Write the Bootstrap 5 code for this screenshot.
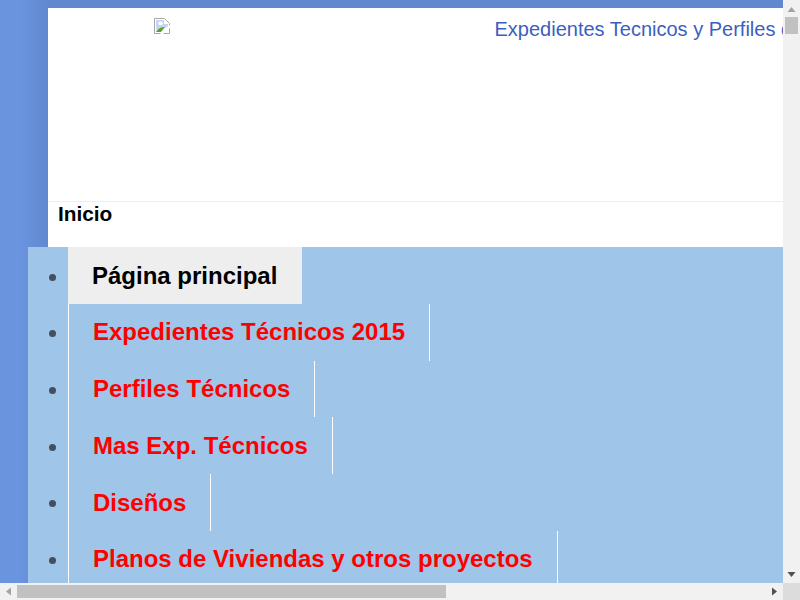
<!DOCTYPE html>
<html lang="es">
<head>
  <meta charset="UTF-8" />
  <title>Expedientes Tecnicos</title>
  <link href="https://cdn.jsdelivr.net/npm/bootstrap@5.3.0/dist/css/bootstrap.min.css" rel="stylesheet">
  <style>
    html, body { height: 100%; overflow: hidden; }
    body { font-family: "Liberation Sans", Arial, sans-serif; background: #f1f1f1; }

    .shell { width: 800px; height: 600px; }
    .shell-main { min-height: 0; }
    .page-view {
      width: 783px;
      overflow: hidden;
      padding-top: 8px;
      background: linear-gradient(90deg, #6b94df 0, #6b94df 20px, #5f88cf 48px);
    }

    .sheet { margin-left: 48px; background: #fff; }
    .sheet-top { height: 193px; }
    .broken-pic { margin: 10px 0 0 106px; width: 16px; height: 16px; }
    .site-title { margin: 8px 0 0 324.500px; font-size: 20px; line-height: 26px; color: #3b5fc0; white-space: nowrap; }
    .sheet-foot { height: 46.300px; border-top: 1px solid #eee; padding-left: 10px; }
    .sheet-foot h2 { font-size: 20.800px; font-weight: 700; line-height: 24px; margin: 0; color: #000; }

    .menu-band { margin: 0 0 0 28px; padding: 0; background: #9fc5e8; list-style: none; }
    .menu-row { display: flex; height: 56.700px; }
    .menu-dot { width: 40px; display: flex; align-items: center; justify-content: center; padding-top: 3px; flex: none; }
    .menu-dot i { width: 7px; height: 7px; border-radius: 50%; background: #444e5f; margin-left: 8px; }
    .menu-link {
      display: block;
      height: 100%;
      font-size: 24px;
      font-weight: 700;
      line-height: 56px;
      padding: .48px 24px 0;
      color: #f00;
      text-decoration: none;
      white-space: nowrap;
      border-left: 1px solid #fff;
      border-right: 1px solid #fff;
    }
    .menu-link.is-current { color: #000; background: #eee; border-left: 0; border-right-color: #eee; }

    .bar-y { width: 17px; background: #f1f1f1; }
    .bar-x { height: 17px; background: #f1f1f1; }
    .bar-btn { width: 17px; height: 17px; flex: none; }
    .thumb-y { height: 17px; width: 13px; margin: 0 auto; background: #c1c1c1; }
    .thumb-x { width: 429px; height: 13px; margin-top: 2px; background: #c1c1c1; }
    .corner { width: 17px; height: 17px; background: #dcdcdc; }
  </style>
</head>
<body class="m-0">
  <div class="shell d-flex flex-column">
    <div class="shell-main d-flex flex-grow-1">
      <div class="page-view">
        <div class="sheet">
          <div class="sheet-top d-flex">
            <svg class="broken-pic flex-shrink-0" viewBox="0 0 16 16">
              <path d="M.5.5H10.500L15.500 5.500V15.500H.5Z" fill="#fff" stroke="#a8a8a8"/>
              <path d="M2 2H10V6H14V9L2 12Z" fill="#c5d5f3"/>
              <path d="M4 5C5 3 8 3 9 5L8 7H5Z" fill="#fff"/>
              <path d="M2 14C4 10 8 9 11 9L7 14Z" fill="#5ba02e"/>
              <path d="M7 16L16 8" stroke="#fff" stroke-width="2.500"/>
            </svg>
            <div class="site-title">Expedientes Tecnicos y Perfiles de Proyectos</div>
          </div>
          <div class="sheet-foot"><h2>Inicio</h2></div>
        </div>
        <ul class="menu-band">
          <li class="menu-row"><span class="menu-dot"><i></i></span><a class="menu-link is-current" href="#">Página principal</a></li>
          <li class="menu-row"><span class="menu-dot"><i></i></span><a class="menu-link" href="#">Expedientes Técnicos 2015</a></li>
          <li class="menu-row"><span class="menu-dot"><i></i></span><a class="menu-link" href="#">Perfiles Técnicos</a></li>
          <li class="menu-row"><span class="menu-dot"><i></i></span><a class="menu-link" href="#">Mas Exp. Técnicos</a></li>
          <li class="menu-row"><span class="menu-dot"><i></i></span><a class="menu-link" href="#">Diseños</a></li>
          <li class="menu-row"><span class="menu-dot"><i></i></span><a class="menu-link" href="#">Planos de Viviendas y otros proyectos</a></li>
        </ul>
      </div>
      <div class="bar-y d-flex flex-column">
        <svg class="bar-btn" viewBox="0 0 17 17"><path d="M4.500 12L8.500 7L12.500 12Z" fill="#a3a3a3"/></svg>
        <div class="thumb-y"></div>
        <svg class="bar-btn mt-auto" viewBox="0 0 17 17"><path d="M4.500 6L8.500 11L12.500 6Z" fill="#505050"/></svg>
      </div>
    </div>
    <div class="bar-x d-flex">
      <svg class="bar-btn" viewBox="0 0 17 17"><path d="M11 4.500L6 8.500L11 12.500Z" fill="#a3a3a3"/></svg>
      <div class="thumb-x"></div>
      <svg class="bar-btn ms-auto" viewBox="0 0 17 17"><path d="M6 4.500L11 8.500L6 12.500Z" fill="#505050"/></svg>
      <div class="corner"></div>
    </div>
  </div>
  <script src="https://cdn.jsdelivr.net/npm/bootstrap@5.3.0/dist/js/bootstrap.bundle.min.js"></script>
</body>
</html>
